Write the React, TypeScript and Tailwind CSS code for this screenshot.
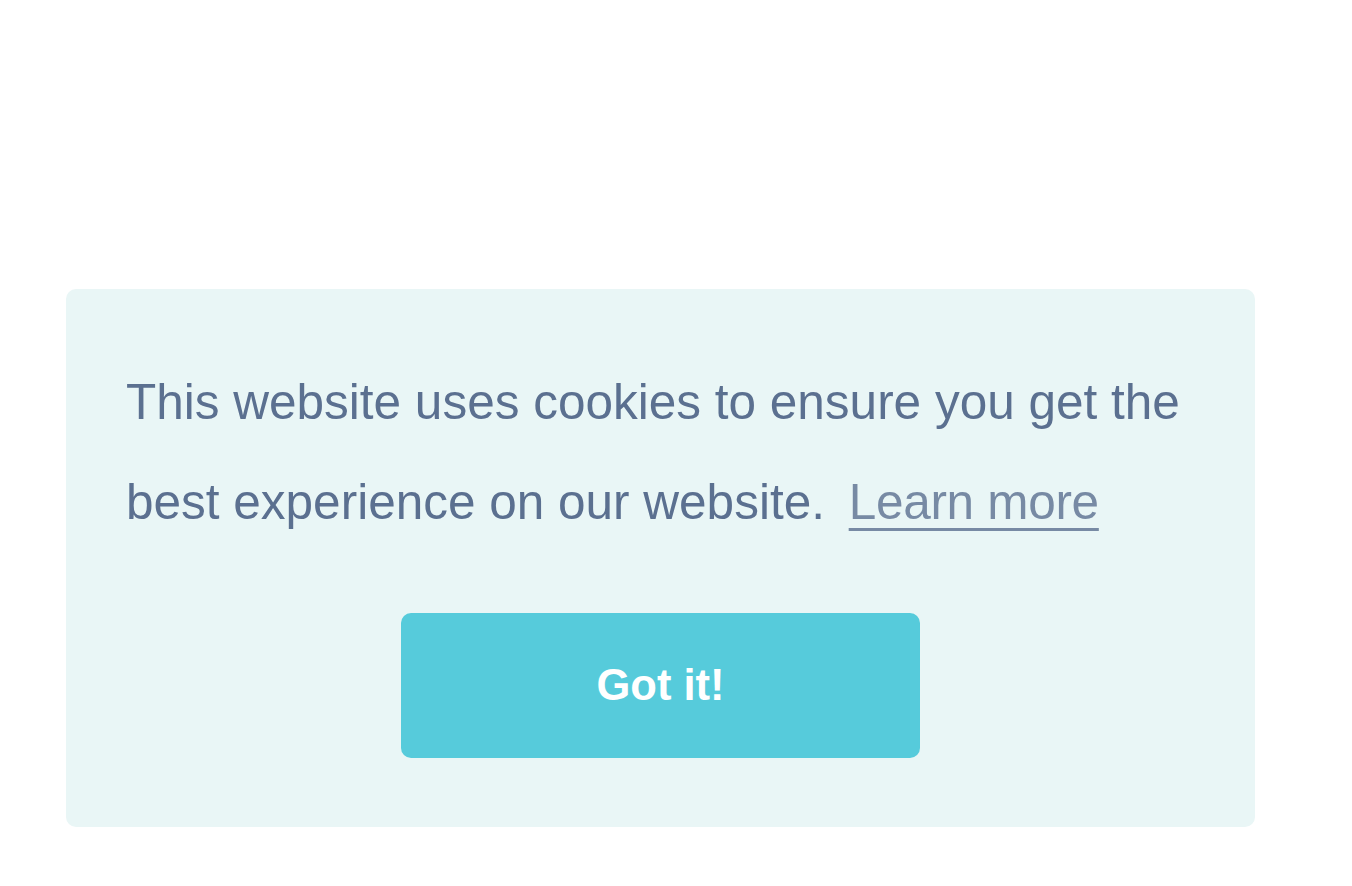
export default function App() {
  return (
    <div className="min-h-screen w-full bg-white pt-[289px] pl-[66px] font-['Liberation_Sans',Arial,sans-serif]">
      {/* Cookie consent window */}
      <div className="w-[1189px] rounded-[10px] bg-[#e9f6f6] px-[60px] pt-[63px] pb-[69px]">
        <p className="text-[49.5px] leading-[100px] text-[#5b7090]">
          <span>This website uses cookies to ensure you get the best experience on our website.</span>{" "}
          <a
            href="#"
            className="ml-[10px] inline-block tracking-[-0.3px] underline decoration-[3px] underline-offset-[9px] opacity-80"
          >
            Learn more
          </a>
        </p>
        <div className="mt-[61px] flex justify-center">
          <button className="flex h-[145px] w-[519px] items-center justify-center rounded-[10px] bg-[#56cbdb] text-[43.5px] font-bold text-white">
            Got it!
          </button>
        </div>
      </div>
    </div>
  );
}
